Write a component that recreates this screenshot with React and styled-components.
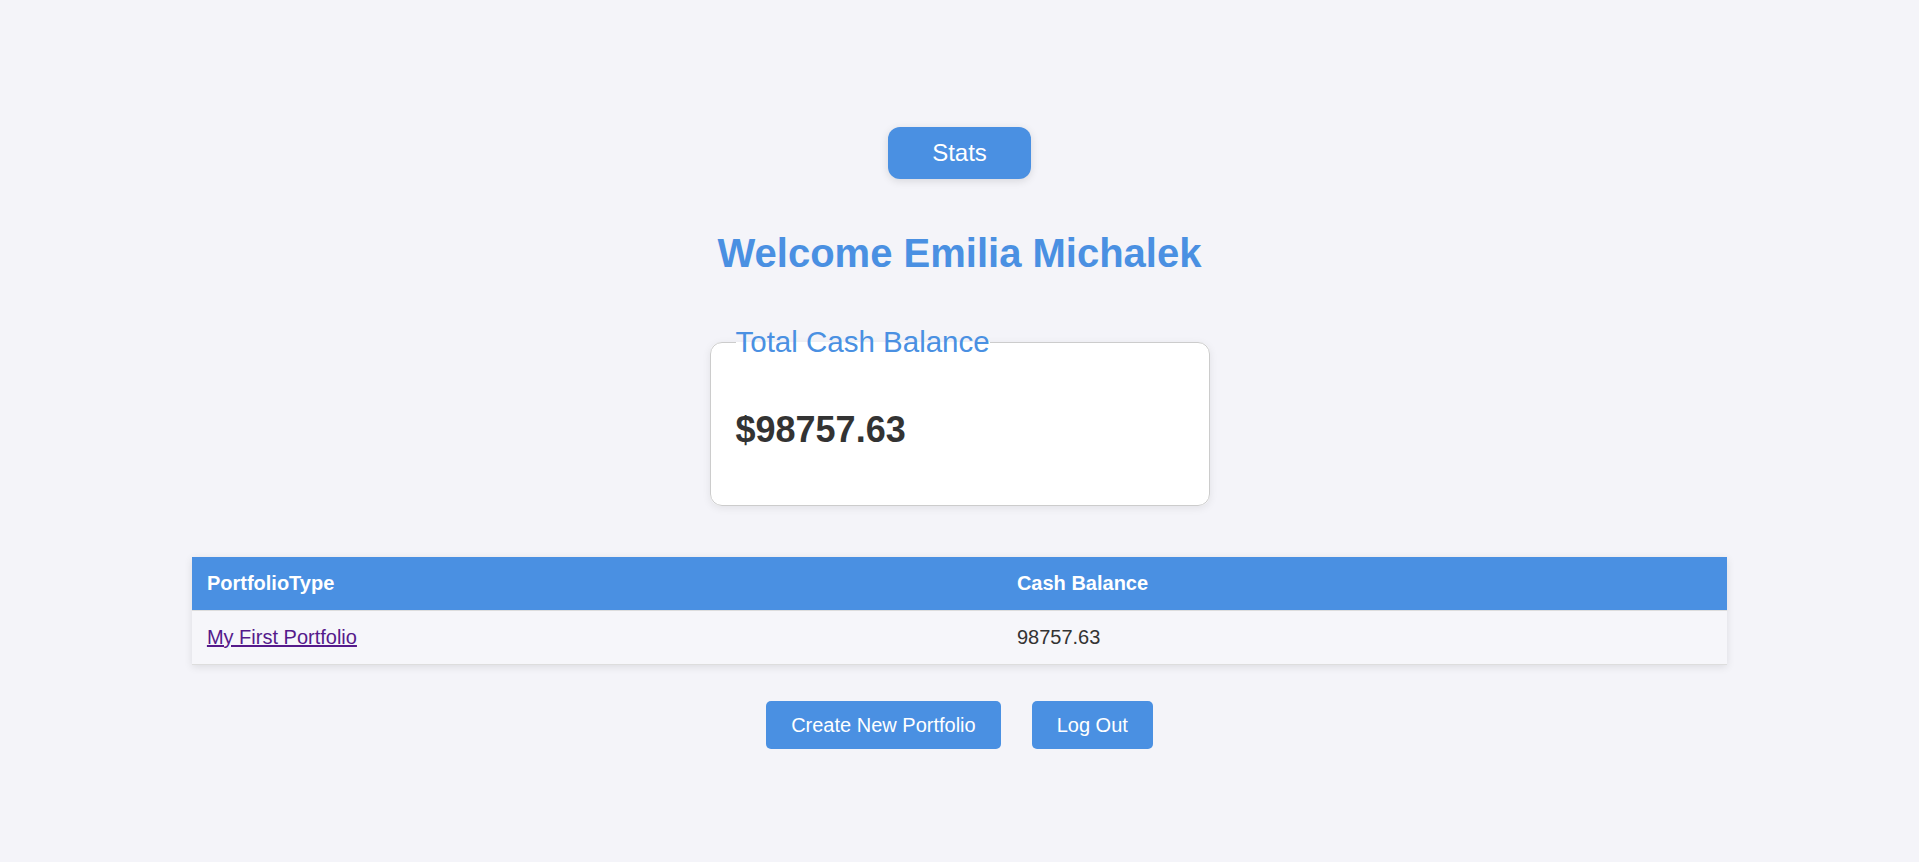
import styled, { createGlobalStyle } from 'styled-components';

const GlobalStyle = createGlobalStyle`
  body {
    margin: 0;
    background-color: #f4f4f9;
    font-family: "Liberation Sans", Arial, sans-serif;
    color: #333;
  }
`;

const Page = styled.main`
  display: flex;
  flex-direction: column;
  align-items: center;
  padding: 127px 0 60px;
`;

const StatsButton = styled.button`
  font-family: inherit;
  font-size: 24px;
  line-height: normal;
  padding: 12px 44px;
  border: none;
  border-radius: 12px;
  background-color: #4a90e2;
  color: #fff;
  box-shadow: 0 2px 8px rgba(0, 0, 0, 0.12);
  cursor: pointer;
`;

const Title = styled.h1`
  margin: 52px 0 49px;
  font-size: 40px;
  font-weight: 700;
  line-height: normal;
  color: #4a90e2;
`;

const BalanceCard = styled.fieldset`
  box-sizing: border-box;
  width: 500px;
  margin: 0;
  padding: 0 25px 20px;
  background-color: #fff;
  border: 1px solid #ccc;
  border-radius: 12px;
  box-shadow: 0 2px 8px rgba(0, 0, 0, 0.08);
  legend {
    padding: 0;
    font-size: 29.5px;
    line-height: normal;
    color: #4a90e2;
  }
`;

const Amount = styled.p`
  margin: 50px 0 34px;
  font-size: 36px;
  font-weight: 700;
  line-height: normal;
  color: #333;
`;

const Table = styled.table`
  width: 80%;
  margin-top: 51px;
  border-collapse: collapse;
  background-color: #f6f6fa;
  box-shadow: 0 2px 8px rgba(0, 0, 0, 0.1);
  font-size: 20px;
  th,
  td {
    padding: 15px;
    text-align: left;
    border-bottom: 1px solid #ddd;
  }
  th {
    background-color: #4a90e2;
    color: #fff;
    font-weight: 700;
  }
  td {
    color: #333;
  }
  a {
    color: #551a8b;
  }
`;

const Actions = styled.div`
  display: flex;
  gap: 31px;
  margin-top: 36px;
`;

const ActionButton = styled.button`
  font-family: inherit;
  font-size: 20px;
  line-height: normal;
  padding: 12.5px 25px;
  border: none;
  border-radius: 5px;
  background-color: #4a90e2;
  color: #fff;
  cursor: pointer;
`;

const portfolios = [{ name: 'My First Portfolio', balance: '98757.63' }];

const App = () => {
  return (
    <>
      <GlobalStyle />
      <Page>
        <StatsButton>Stats</StatsButton>
        <Title>Welcome Emilia Michalek</Title>
        <BalanceCard>
          <legend>Total Cash Balance</legend>
          <Amount>$98757.63</Amount>
        </BalanceCard>
        <Table>
          <thead>
            <tr>
              <th>PortfolioType</th>
              <th>Cash Balance</th>
            </tr>
          </thead>
          <tbody>
            {portfolios.map((p) => (
              <tr key={p.name}>
                <td>
                  <a href="#portfolio">{p.name}</a>
                </td>
                <td>{p.balance}</td>
              </tr>
            ))}
          </tbody>
        </Table>
        <Actions>
          <ActionButton>Create New Portfolio</ActionButton>
          <ActionButton>Log Out</ActionButton>
        </Actions>
      </Page>
    </>
  );
};

export default App;
